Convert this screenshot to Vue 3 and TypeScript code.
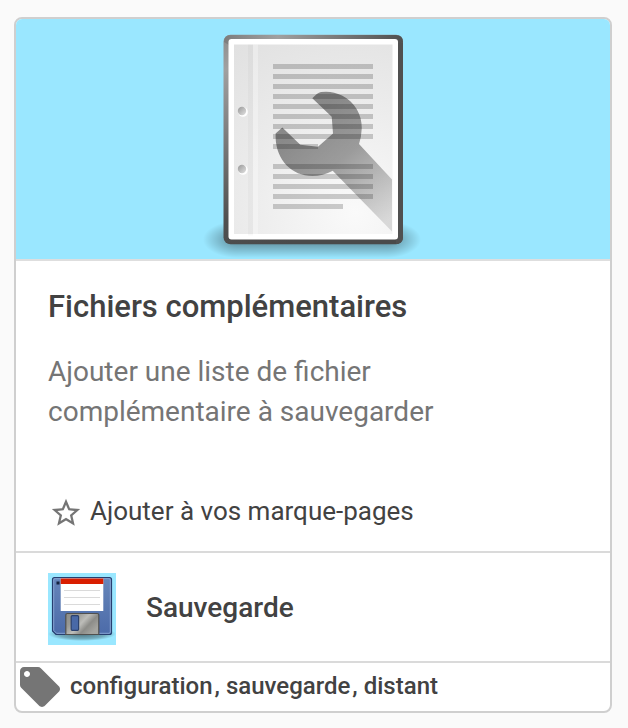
<script setup lang="ts">
interface Rule {
  y: number
  width: number
}

const title = 'Fichiers complémentaires'
const description = 'Ajouter une liste de fichier complémentaire à sauvegarder'
const category = 'Sauvegarde'
const tags: string[] = ['configuration', 'sauvegarde', 'distant']

const rules: Rule[] = [
  ...[64, 74, 84, 94, 104, 114, 124, 134].map((y) => ({ y, width: 100 })),
  { y: 144, width: 45 },
  ...[164, 174, 184, 194].map((y) => ({ y, width: 100 })),
  { y: 204, width: 70 },
]
const holes: number[] = [111, 169]
</script>

<template>
  <main class="page">
    <article class="card">
      <div class="media">
        <svg class="cover" viewBox="193 19 240 240" aria-hidden="true">
          <defs>
            <linearGradient id="frame" x1="0" y1="0" x2="0.35" y2="1">
              <stop offset="0" stop-color="#8c8c8c" />
              <stop offset="0.15" stop-color="#a0a0a0" />
              <stop offset="0.5" stop-color="#747474" />
              <stop offset="0.8" stop-color="#4f4f4f" />
              <stop offset="1" stop-color="#4a4a4a" />
            </linearGradient>
            <linearGradient id="frameTop" x1="0" y1="0" x2="1" y2="0">
              <stop offset="0" stop-color="#7d7d7d" />
              <stop offset="0.3" stop-color="#a0a0a0" />
              <stop offset="1" stop-color="#505050" />
            </linearGradient>
            <radialGradient id="paper" gradientUnits="userSpaceOnUse" cx="355" cy="212" r="230">
              <stop offset="0" stop-color="#fafafa" />
              <stop offset="0.5" stop-color="#ebebeb" />
              <stop offset="1" stop-color="#dedede" />
            </radialGradient>
            <linearGradient id="wrench" gradientUnits="userSpaceOnUse" x1="310" y1="120" x2="392" y2="216">
              <stop offset="0" stop-color="#000" stop-opacity="0.42" />
              <stop offset="0.4" stop-color="#000" stop-opacity="0.36" />
              <stop offset="1" stop-color="#000" stop-opacity="0.12" />
            </linearGradient>
            <linearGradient id="shadeMiddle" x1="0" y1="0" x2="0" y2="1">
              <stop offset="0" stop-color="#000" stop-opacity="0" />
              <stop offset="0.5" stop-color="#000" stop-opacity="0.42" />
              <stop offset="1" stop-color="#000" stop-opacity="0" />
            </linearGradient>
            <radialGradient id="shadeLeft" gradientUnits="userSpaceOnUse" cx="0" cy="0" r="1" gradientTransform="translate(238 239.500) scale(35 18.500)">
              <stop offset="0" stop-color="#000" stop-opacity="0.42" />
              <stop offset="1" stop-color="#000" stop-opacity="0" />
            </radialGradient>
            <radialGradient id="shadeRight" gradientUnits="userSpaceOnUse" cx="0" cy="0" r="1" gradientTransform="translate(386 239.500) scale(35 18.500)">
              <stop offset="0" stop-color="#000" stop-opacity="0.42" />
              <stop offset="1" stop-color="#000" stop-opacity="0" />
            </radialGradient>
            <linearGradient id="hole" x1="0" y1="0" x2="1" y2="1">
              <stop offset="0" stop-color="#989898" />
              <stop offset="1" stop-color="#e2e2e2" />
            </linearGradient>
          </defs>
          <rect x="238" y="221" width="148" height="37" fill="url(#shadeMiddle)" />
          <path d="M238 221v37h-35v-37z" fill="url(#shadeLeft)" />
          <path d="M386 221v37h35v-37z" fill="url(#shadeRight)" />
          <rect x="223.500" y="34.700" width="179.500" height="209.500" rx="7" fill="url(#frame)" />
          <path d="M224 42q0-7 7-7h165q7 0 7 7l-5 3H229z" fill="url(#frameTop)" />
          <path d="M403 42v195q0 7-7 7l-1-200z" fill="#505050" />
          <rect x="228.500" y="39" width="169.500" height="200.500" rx="3" fill="#fff" />
          <rect x="234" y="44.500" width="158.500" height="189.500" fill="url(#paper)" />
          <path d="M248 44.500h5v191h-5z" fill="#000" opacity="0.025" />
          <path d="M253 44.500h5v191h-5z" fill="#fff" opacity="0.3" />
          <g v-for="y in holes" :key="y">
            <circle cx="243" :cy="y + 1" r="4.800" fill="#fff" />
            <circle cx="242" :cy="y" r="4.200" fill="url(#hole)" />
          </g>
          <rect
            v-for="rule in rules"
            :key="rule.y"
            x="273"
            :y="rule.y"
            :width="rule.width"
            height="5"
            fill="#000"
            opacity="0.19"
          />
          <path
            d="M312.300 98.300Q317 93 321 92Q332 90.500 342 95.500C355 102 362 115 361.800 128Q361.500 137 359 144L392 179.500V231.500L332.700 170.700Q323 176 312.300 176C292 176 276 160 275.600 137V133.500L282.300 127.600L300.300 144.700L318 146.700L333 133.400L331.700 116.700Z"
            fill="url(#wrench)"
          />
        </svg>
      </div>

      <div class="summary">
        <h2 class="title">{{ title }}</h2>
        <p class="description">{{ description }}</p>
        <button type="button" class="bookmark">
          <svg class="star" viewBox="0 0 24 24" aria-hidden="true">
            <path
              d="M22 9.240l-7.190-.62L12 2 9.190 8.630 2 9.240l5.460 4.730L5.820 21 12 17.270 18.180 21l-1.630-7.030L22 9.240zM12 15.400l-3.760 2.270 1-4.280-3.320-2.880 4.380-.38L12 6.100l1.710 4.040 4.380.38-3.320 2.880 1 4.280L12 15.400z"
            />
          </svg>
          <span>Ajouter à vos marque-pages</span>
        </button>
      </div>

      <a class="category" href="#sauvegarde">
        <svg class="thumb" viewBox="48 573 68 72" aria-hidden="true">
          <defs>
            <linearGradient id="disk" x1="0" y1="0" x2="0" y2="1">
              <stop offset="0" stop-color="#6686ba" />
              <stop offset="1" stop-color="#4c6ba9" />
            </linearGradient>
            <linearGradient id="shutter" x1="0" y1="0" x2="1" y2="0.600">
              <stop offset="0" stop-color="#8c8c88" />
              <stop offset="0.3" stop-color="#999994" />
              <stop offset="0.55" stop-color="#bdbdb9" />
              <stop offset="0.75" stop-color="#8c8c88" />
              <stop offset="1" stop-color="#a5a5a0" />
            </linearGradient>
            <radialGradient id="diskShade">
              <stop offset="0" stop-color="#000" stop-opacity="0.5" />
              <stop offset="0.7" stop-color="#000" stop-opacity="0.25" />
              <stop offset="1" stop-color="#000" stop-opacity="0" />
            </radialGradient>
          </defs>
          <path d="M48 573h68v72H48z" fill="#9ae7ff" />
          <ellipse cx="82" cy="634" rx="34" ry="7" fill="url(#diskShade)" />
          <path
            d="M54.500 577.500h55q2 0 2 2v53q0 2-2 2H56l-3.500-3.500v-51.500q0-2 2-2z"
            fill="url(#disk)"
            stroke="#263f70"
            stroke-width="1.200"
          />
          <path
            d="M55 578.700h54q1.300 0 1.300 1.300v52q0 1.300-1.300 1.300H56.600l-2.900-2.900V580q0-1.300 1.300-1.300z"
            fill="none"
            stroke="#85a2d0"
            stroke-width="1"
          />
          <path d="M56.500 581.500h3v3h-3z" fill="#14223f" />
          <path d="M60.700 578.500h42.600V611H60.700z" fill="#fff" />
          <path d="M60.700 578.500h42.600v5.500H60.700z" fill="#d91e00" />
          <path d="M64 590.500h36M64 597.500h36M64 604.500h36" stroke="#dadada" stroke-width="1.200" />
          <path
            d="M65.800 634.500V615q0-1.500 1.500-1.500h30q1.500 0 1.500 1.500v19.500z"
            fill="url(#shutter)"
            stroke="#50504e"
            stroke-width="1.200"
          />
          <rect x="71.200" y="615.700" width="7.400" height="14.600" rx="1" fill="#4969a7" stroke="#2c426e" stroke-width="1.200" />
        </svg>
        <span class="category-name">{{ category }}</span>
      </a>

      <footer class="tags">
        <svg class="tag-icon" viewBox="0 0 24 24" aria-hidden="true">
          <path
            d="M21.410 11.580l-9-9C12.050 2.220 11.550 2 11 2H4c-1.100 0-2 .9-2 2v7c0 .55.22 1.050.59 1.420l9 9c.36.36.86.58 1.410.58.55 0 1.050-.22 1.410-.59l7-7c.37-.36.59-.86.59-1.410 0-.55-.23-1.060-.59-1.420zM5.500 7C4.670 7 4 6.330 4 5.500S4.670 4 5.500 4 7 4.670 7 5.500 6.330 7 5.500 7z"
          />
        </svg>
        <span class="tag-list">
          <template v-for="(tag, index) in tags" :key="tag">
            <span>{{ tag }}</span><span v-if="index < tags.length - 1" class="separator">,&#32;</span>
          </template>
        </span>
      </footer>
    </article>
  </main>
</template>

<style>
body {
  background: #fafafa;
}
</style>

<style scoped>
.page {
  padding: 17px 16px 15px 14px;
  font-family: Roboto, "Liberation Sans", sans-serif;
  color: #424242;
}

.card {
  overflow: hidden;
  border: 2px solid #cfcfcf;
  border-radius: 8px;
  background: #fff;
}

.media {
  display: flex;
  justify-content: center;
  border-bottom: 2px solid #dedede;
  background: #9ae7ff;
}

.cover {
  display: block;
  width: 240px;
  height: 240px;
}

.summary {
  padding: 24px 32px 20px;
}

.title {
  margin: 0;
  font-size: 31px;
  font-weight: 500;
  line-height: 43px;
}

.description {
  max-width: 400px;
  margin: 24px 0 59px;
  color: #757575;
  font-size: 28px;
  line-height: 40px;
}

.bookmark {
  display: flex;
  align-items: center;
  gap: 6px;
  padding: 0;
  border: 0;
  background: none;
  color: inherit;
  font: inherit;
  font-size: 26px;
  line-height: 40px;
  cursor: pointer;
}

.star {
  width: 34px;
  height: 34px;
  padding: 4px 1px 0;
  fill: #757575;
}

.category {
  display: flex;
  align-items: center;
  gap: 30px;
  padding: 20px 32px 16px;
  border-top: 2px solid #dadada;
  color: inherit;
  font-size: 28px;
  font-weight: 500;
  text-decoration: none;
}

.category-name {
  padding-bottom: 4px;
}

.thumb {
  width: 68px;
  height: 72px;
}

.tags {
  display: flex;
  align-items: center;
  gap: 6px;
  border-top: 2px solid #dadada;
  font-size: 24px;
  font-weight: 500;
}

.tag-list {
  padding-bottom: 2px;
}

.separator {
  margin-left: 2px;
}

.tag-icon {
  width: 48px;
  height: 48px;
  fill: #757575;
}
</style>
